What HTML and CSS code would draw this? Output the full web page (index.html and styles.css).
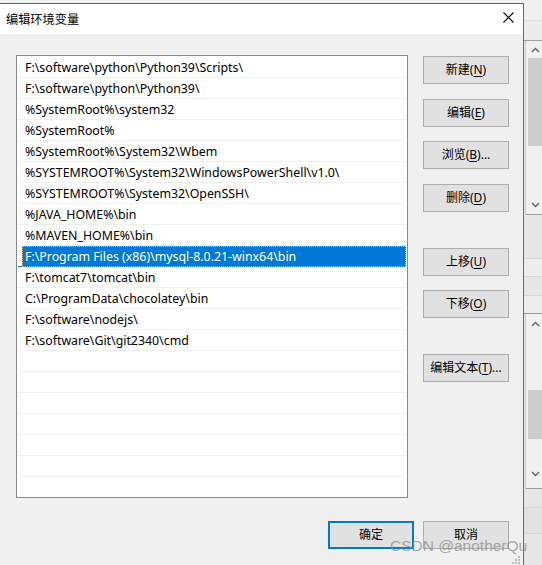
FILE: index.html
```html
<!DOCTYPE html>
<html lang="zh-CN">
<head>
<meta charset="utf-8">
<title>编辑环境变量</title>
<link rel="stylesheet" href="styles.css">
</head>
<body>
<div class="screen">
  <div class="dialog">
    <div class="titlebar">
      <span class="title">编辑环境变量</span>
      <svg class="close" width="11" height="11" viewBox="0 0 11 11"><path d="M0.5 0.5 L10.5 10.5 M10.5 0.5 L0.5 10.5" stroke="#000" stroke-width="1.1" fill="none"/></svg>
    </div>
    <div class="body">
      <div class="main">
        <div class="list">
          <div class="row">F:\software\python\Python39\Scripts\</div>
          <div class="row">F:\software\python\Python39\</div>
          <div class="row">%SystemRoot%\system32</div>
          <div class="row">%SystemRoot%</div>
          <div class="row">%SystemRoot%\System32\Wbem</div>
          <div class="row">%SYSTEMROOT%\System32\WindowsPowerShell\v1.0\</div>
          <div class="row">%SYSTEMROOT%\System32\OpenSSH\</div>
          <div class="row">%JAVA_HOME%\bin</div>
          <div class="row">%MAVEN_HOME%\bin</div>
          <div class="row sel"><span class="seltext">F:\Program Files (x86)\mysql-8.0.21-winx64\bin</span></div>
          <div class="row">F:\tomcat7\tomcat\bin</div>
          <div class="row">C:\ProgramData\chocolatey\bin</div>
          <div class="row">F:\software\nodejs\</div>
          <div class="row">F:\software\Git\git2340\cmd</div>
          <div class="row"></div>
          <div class="row"></div>
          <div class="row"></div>
          <div class="row"></div>
          <div class="row"></div>
          <div class="row"></div>
          <div class="row"></div>
        </div>
        <div class="side">
          <button class="btn g1">新建(<u>N</u>)</button>
          <button class="btn g2">编辑(<u>E</u>)</button>
          <button class="btn g3">浏览(<u>B</u>)...</button>
          <button class="btn g4">删除(<u>D</u>)</button>
          <button class="btn g5">上移(<u>U</u>)</button>
          <button class="btn g6">下移(<u>O</u>)</button>
          <button class="btn g7">编辑文本(<u>T</u>)...</button>
        </div>
      </div>
      <div class="footer">
        <button class="btn ok">确定</button>
        <button class="btn">取消</button>
      </div>
      <svg class="grip" width="9" height="9" viewBox="0 0 9 9">
        <rect x="6" y="0" width="2" height="2" fill="#bdbdbd"/>
        <rect x="3" y="3" width="2" height="2" fill="#bdbdbd"/>
        <rect x="6" y="3" width="2" height="2" fill="#bdbdbd"/>
        <rect x="0" y="6" width="2" height="2" fill="#bdbdbd"/>
        <rect x="3" y="6" width="2" height="2" fill="#bdbdbd"/>
        <rect x="6" y="6" width="2" height="2" fill="#bdbdbd"/>
      </svg>
    </div>
  </div>
  <div class="behind">
    <div class="seg s-a"></div>
    <div class="seg s-b"></div>
    <div class="sbar sb1">
      <svg class="arrow" width="9" height="6" viewBox="0 0 9 6"><path d="M1 5 L4.5 1.5 L8 5" stroke="#606060" stroke-width="1.4" fill="none"/></svg>
      <div class="thumb t1"></div>
      <svg class="arrow down1" width="9" height="6" viewBox="0 0 9 6"><path d="M1 1 L4.5 4.5 L8 1" stroke="#606060" stroke-width="1.4" fill="none"/></svg>
    </div>
    <div class="seg s-c"></div>
    <div class="seg s-d"></div>
    <div class="seg s-e"></div>
    <div class="seg s-f"></div>
    <div class="sbar sb2">
      <svg class="arrow" width="9" height="6" viewBox="0 0 9 6"><path d="M1 5 L4.5 1.5 L8 5" stroke="#606060" stroke-width="1.4" fill="none"/></svg>
      <div class="thumb t2"></div>
      <svg class="arrow down2" width="9" height="6" viewBox="0 0 9 6"><path d="M1 1 L4.5 4.5 L8 1" stroke="#606060" stroke-width="1.4" fill="none"/></svg>
    </div>
    <div class="seg s-g"></div>
    <div class="seg s-h"></div>
    <div class="seg s-i"></div>
  </div>
  <div class="watermark">CSDN @anotherQu</div>
</div>
</body>
</html>
```

FILE: styles.css
```css
* { box-sizing: border-box; }
html, body { margin: 0; padding: 0; }
body {
  width: 542px;
  height: 565px;
  overflow: hidden;
  background: #f0f0f0;
  font-family: "Noto Sans", "Noto Sans CJK SC", sans-serif;
  font-size: 12px;
  color: #000;
}
.screen {
  position: relative;
  display: flex;
  width: 542px;
  height: 565px;
}
.dialog {
  position: relative;
  width: 524px;
  height: 562px;
  margin-top: 3px;
  border-top: 1px solid #5e5e5e;
  border-right: 1px solid #6a6a6a;
  background: #f0f0f0;
  display: flex;
  flex-direction: column;
}
.titlebar {
  height: 30px;
  background: #fff;
  display: flex;
  align-items: center;
  justify-content: space-between;
  padding: 0 9px 0 6px;
}
.title {
  font-size: 12.2px;
  line-height: 16px;
  margin-top: 1px;
}
.close { display: block; margin-top: -3px; }
.body {
  flex: 1;
  padding: 21px 14px 0 16px;
  display: flex;
  flex-direction: column;
}
.main {
  display: flex;
  gap: 15px;
}
.list {
  width: 392px;
  height: 443px;
  border: 1px solid #828790;
  background: #fff;
  padding-top: 1px;
  overflow: hidden;
}
.row {
  height: 21px;
  margin: 0 1px;
  border-bottom: 1px solid #f0f0f0;
  padding-left: 7px;
  font-size: 12.35px;
  line-height: 21px;
  white-space: nowrap;
}
.row.sel {
  background: linear-gradient(to right, transparent 4px, #0078d7 4px);
  border-bottom-color: #0078d7;
  color: #fff;
  position: relative;
}
.row.sel::after {
  content: "";
  position: absolute;
  left: 4px; right: 0; top: 0; bottom: -1px;
  border: 1px dotted #f0a868;
}
.side {
  display: flex;
  flex-direction: column;
  width: 86px;
}
.btn {
  width: 86px;
  height: 28px;
  background: #e1e1e1;
  border: 1px solid #adadad;
  font-family: "Noto Sans", "Noto Sans CJK SC", sans-serif;
  font-size: 12px;
  color: #000;
  padding: 0;
  line-height: 16px;
  border-radius: 0;
}
.btn u { text-underline-offset: 2px; }
.g1 { margin-top: 1px; }
.g2 { margin-top: 15px; }
.g3 { margin-top: 14px; }
.g4 { margin-top: 15px; }
.g5 { margin-top: 36px; }
.g6 { margin-top: 14px; }
.g7 { margin-top: 36px; }
.footer {
  display: flex;
  justify-content: flex-end;
  gap: 9px;
  margin-top: 23px;
}
.btn.ok { border: 2px solid #0078d7; }
.grip {
  position: absolute;
  right: 2px;
  bottom: 0;
}
.behind {
  width: 18px;
  height: 565px;
  display: flex;
  flex-direction: column;
  background: #ececec;
}
.seg { border-bottom: 1px solid #d6d6d6; }
.s-a { height: 21px; background: #f0f0f0; border-bottom-color: #dedede; }
.s-b { height: 20px; background: #ececec; border-bottom-color: #9d9d9d; }
.sbar {
  position: relative;
  border-left: 1px solid #c9c9c9;
  margin-left: 1px;
  padding-left: 2px;
  background: #f0f0f0;
  border-bottom: 1px solid #9d9d9d;
  display: flex;
  flex-direction: column;
  align-items: stretch;
}
.sb1 { height: 174px; }
.sb2 { height: 175px; }
.arrow { display: block; margin: 0 auto; }
.sb1 .arrow:first-child { margin-top: 6px; }
.t1 { height: 88px; margin-top: 5px; background: #cdcdcd; }
.down1 { margin-top: 56px; }
.sb2 .arrow:first-child { margin-top: 7px; }
.t2 { height: 49px; margin-top: 63px; background: #cdcdcd; }
.down2 { margin-top: 32px; }
.s-c { height: 44px; background: #e6e6e6; }
.s-d { height: 18px; background: #ededed; }
.s-e { height: 19px; background: #e6e6e6; }
.s-f { height: 18px; background: #ededed; border-bottom-color: #9d9d9d; }
.s-g { height: 19px; background: #e6e6e6; }
.s-h { height: 26px; background: #e2e2e2; }
.s-i { flex: 1; background: #e6e6e6; border-bottom: none; }
.watermark {
  position: absolute;
  left: 390px;
  top: 537px;
  font-family: "Liberation Sans", Arial, sans-serif;
  font-size: 15.5px;
  line-height: 18px;
  color: rgba(140, 140, 140, 0.75);
  white-space: nowrap;
}
```
